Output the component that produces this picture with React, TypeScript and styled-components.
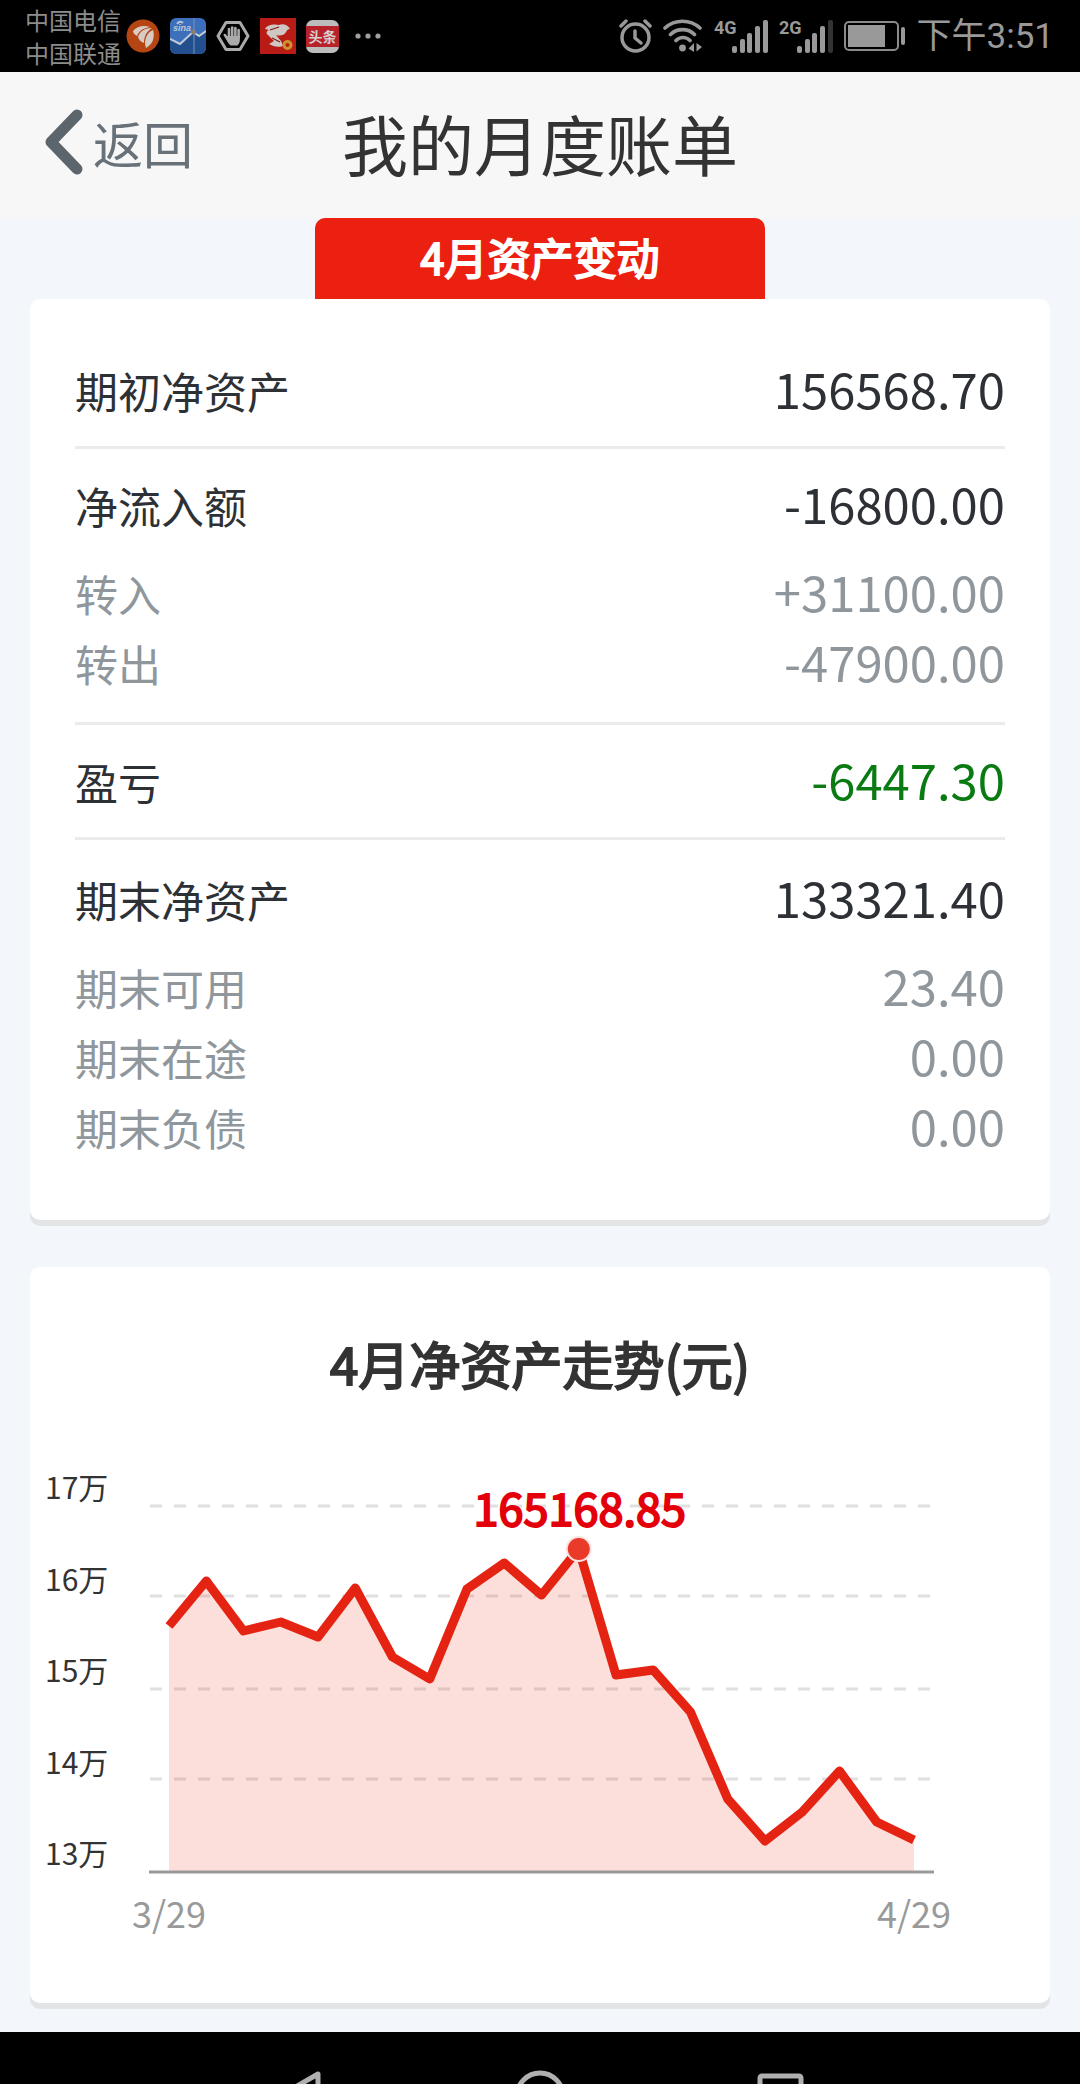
import React from "react";
import styled, { createGlobalStyle } from "styled-components";

const GlobalStyle = createGlobalStyle`
  *, *::before, *::after { box-sizing: border-box; }
  body {
    margin: 0;
    background: #f3f7fb;
    font-family: "Noto Sans CJK SC", "Noto Sans", sans-serif;
    color: #2d3135;
  }
`;

const Page = styled.div`
  display: flex;
  flex-direction: column;
  min-height: 100vh;
`;

/* ---------- status bar ---------- */

const StatusBar = styled.div`
  display: flex;
  align-items: center;
  justify-content: space-between;
  height: 72px;
  padding: 0 26px 0 25px;
  background: #000;
  color: #999;
`;

const StatusGroup = styled.div<{ $gap: number }>`
  display: flex;
  align-items: center;
  gap: ${(p) => p.$gap}px;

  svg { display: block; flex: none; }
`;

const Carriers = styled.div`
  font-size: 24px;
  line-height: 33px;
  color: #8c8c8c;
  margin-right: -5px;
`;

const Clock = styled.time`
  font-family: Roboto, "Noto Sans CJK SC", sans-serif;
  font-size: 35px;
  line-height: 48px;
  padding-top: 2px;
`;

/* ---------- header ---------- */

const Header = styled.header`
  display: grid;
  grid-template-columns: 1fr auto 1fr;
  align-items: center;
  height: 146px;
  padding: 0 42px 7px;
  background: #f7f7f8;
`;

const BackButton = styled.button`
  display: flex;
  align-items: center;
  justify-self: start;
  gap: 10px;
  padding: 0;
  border: 0;
  background: none;
  font: inherit;
  font-size: 50px;
  line-height: 72px;
  color: #687178;
  cursor: pointer;

  svg { display: block; }
`;

const PageTitle = styled.h1`
  margin: 0;
  font-size: 66px;
  font-weight: 400;
  line-height: 96px;
  color: #333;
`;

/* ---------- cards ---------- */

const Content = styled.main`
  display: flex;
  flex-direction: column;
  flex: 1;
  padding: 0 30px 29px;
`;

const TabTitle = styled.h2`
  align-self: center;
  width: 450px;
  margin: 0;
  padding-bottom: 5px;
  border-radius: 10px 10px 0 0;
  background: #ec2010;
  color: #fff;
  font-size: 43px;
  font-weight: 400;
  -webkit-text-stroke: 2px currentColor;
  line-height: 76px;
  text-align: center;
`;

const Card = styled.section`
  border-radius: 10px;
  background: #fff;
  box-shadow: 0 6px 0 #e2e4e6;
`;

const SummaryCard = styled(Card)`
  padding: 35px 45px 56px;
  margin-bottom: 47px;
`;

const ChartCard = styled(Card)`
  padding: 60px 0 43px;
`;

const Group = styled.dl`
  margin: 0;
  padding: 22px 0;
  border-bottom: 3px solid #ebebeb;

  &:last-child {
    padding: 25px 0 0;
    border-bottom: 0;
  }
`;

const Row = styled.div<{ $sub?: boolean }>`
  display: flex;
  align-items: center;
  justify-content: space-between;
  height: ${(p) => (p.$sub ? 70 : 68)}px;
  color: ${(p) => (p.$sub ? "#90979c" : "inherit")};
`;

const SubRows = styled.div`
  padding: 19px 0 2px;
`;

const Label = styled.dt`
  font-size: 43px;
  line-height: 68px;
`;

const Value = styled.dd<{ $loss?: boolean }>`
  margin: 0;
  padding-bottom: 4px;
  font-size: 49px;
  line-height: 64px;
  color: ${(p) => (p.$loss ? "#0a7a12" : "inherit")};
`;

const ChartTitle = styled.h2`
  margin: 0 0 41px;
  font-size: 51px;
  font-weight: 400;
  -webkit-text-stroke: 2px currentColor;
  line-height: 72px;
  text-align: center;
  color: #333;
`;

const Chart = styled.svg`
  display: block;
  width: 100%;
  height: auto;

  .grid { stroke: #e0e0e0; stroke-width: 3; stroke-dasharray: 12 12; }
  .axis { stroke: #999; stroke-width: 3; }
  .area { fill: rgba(236, 32, 16, 0.15); }
  .line { fill: none; stroke: #e52313; stroke-width: 9; stroke-linejoin: round; }
  .y-label { font-size: 30px; fill: #333; }
  .x-label { font-size: 36px; fill: #999; text-anchor: middle; }
  .peak { font-size: 45px; fill: #e3000b; stroke: #e3000b; stroke-width: 2; text-anchor: middle; }
`;

/* ---------- navigation bar ---------- */

const NavBar = styled.nav`
  display: flex;
  justify-content: center;
  gap: 182px;
  height: 52px;
  overflow: hidden;
  background: #000;
`;

const NavButton = styled.button`
  width: 60px;
  height: 100px;
  padding: 0;
  border: 0;
  background: none;
  flex: none;

  svg {
    display: block;
    fill: none;
    stroke: #b0b0b0;
    stroke-width: 5;
    stroke-linejoin: round;
  }
`;

type Item = { label: string; value: string; loss?: boolean; details?: Item[] };

const summary: Item[] = [
  { label: "期初净资产", value: "156568.70" },
  {
    label: "净流入额",
    value: "-16800.00",
    details: [
      { label: "转入", value: "+31100.00" },
      { label: "转出", value: "-47900.00" },
    ],
  },
  { label: "盈亏", value: "-6447.30", loss: true },
  {
    label: "期末净资产",
    value: "133321.40",
    details: [
      { label: "期末可用", value: "23.40" },
      { label: "期末在途", value: "0.00" },
      { label: "期末负债", value: "0.00" },
    ],
  },
];

const gridLines = [66, 156, 249, 339];
const yLabels = [
  { text: "17万", y: 59 },
  { text: "16万", y: 151 },
  { text: "15万", y: 242 },
  { text: "14万", y: 334 },
  { text: "13万", y: 425 },
];

const BASE = 432;
const START_X = 139;
const END_X = 884;
const PEAK = 11;
const heights = [
  186, 141, 191, 182, 197, 148, 217, 239, 149, 123, 155, 109, 235, 230, 272,
  359, 401, 372, 331, 382, 400,
];
const points = heights.map((y, i) => ({
  x: START_X + ((END_X - START_X) * i) / (heights.length - 1),
  y,
}));
const path = points.map((p) => `${p.x},${p.y}`).join(" L");

const signalBars = [
  { x: 18, h: 7 },
  { x: 26, h: 14 },
  { x: 33, h: 20 },
  { x: 41, h: 27 },
  { x: 49, h: 33 },
];

function Signal({ kind, level }: { kind: string; level: number }) {
  return (
    <svg width="54" height="36" viewBox="0 0 54 36" role="img" aria-label={`${kind} 信号`}>
      <text
        x="0"
        y="16"
        fontSize="18"
        fontWeight="700"
        fill="#999"
        fontFamily='"Liberation Sans Narrow", Roboto, sans-serif'
      >
        {kind}
      </text>
      {signalBars.map((b, i) => (
        <rect
          key={b.x}
          x={b.x}
          y={35 - b.h}
          width="5"
          height={b.h}
          rx="2"
          fill={i < level ? "#999" : "#333"}
        />
      ))}
    </svg>
  );
}

function NotificationIcons() {
  return (
    <>
      <svg width="34" height="34" viewBox="0 0 34 34" aria-hidden="true">
        <circle cx="17" cy="17" r="16.5" fill="#b64514" />
        <path d="M7 12 C11 7 18 6 24 8 C17 9 13 12 11 17 C9 16 7 14 7 12 Z" fill="#d8cbc4" />
        <path d="M12 18 C14 12 19 9 26 9 C21 12 18 17 18 24 C15 23 13 21 12 18 Z" fill="#d8cbc4" />
        <path d="M19 25 C19 18 22 13 27 11 C29 18 27 25 20 29 Z" fill="#d8cbc4" />
      </svg>
      <svg width="36" height="36" viewBox="0 0 36 36" aria-hidden="true">
        <rect width="36" height="36" rx="6" fill="#3c70bd" />
        <path d="M0 21 L10 26 L23 14 L29 18 L36 13 V30 a6 6 0 0 1 -6 6 H6 a6 6 0 0 1 -6 -6 Z" fill="#234f8e" />
        <path d="M0 21 L10 26 L23 14 L29 18 L36 13" fill="none" stroke="#c4ccd6" strokeWidth="2" />
        <path d="M24 0 V36" stroke="#7794ba" strokeWidth="1" />
        <circle cx="23.5" cy="14" r="2.5" fill="#8d7f6d" />
        <path d="M7 6 Q10 2 13 5" fill="none" stroke="#bcc6d4" strokeWidth="2" />
        <text x="3" y="13" fontSize="9" fontWeight="700" fontStyle="italic" fill="#bcc6d4" fontFamily='"Liberation Sans", sans-serif'>
          sina
        </text>
      </svg>
      <svg width="34" height="30" viewBox="0 0 34 30" aria-hidden="true">
        <path d="M10 1.5 H24 L32 15 L24 28.5 H10 L2 15 Z" fill="none" stroke="#aaa" strokeWidth="3" strokeLinejoin="round" />
        <g stroke="#aaa" strokeWidth="2.6" strokeLinecap="round" fill="none">
          <path d="M13 16 V8 M16.2 15 V6.5 M19.4 15 V7 M22.6 16 V9 M8.8 14 L12.5 19" />
        </g>
        <path d="M11.7 15 H23.9 V19 C23.9 22 22 24 21.5 24.5 H14.5 C12.5 23 11 20 9 16 Z" fill="#aaa" />
      </svg>
      <svg width="36" height="36" viewBox="0 0 36 36" aria-hidden="true">
        <rect width="36" height="36" fill="#b81c14" />
        <path d="M5 11 C8 6 15 6 19 7 C23 5 28 7 30 11 C28 11 27 12 26 14 C24 18 19 18 16 17 L21 23 L23 28 C17 30 13 28 9 26 L14 23 L8 17 C6 16 6 13 9 12 Z" fill="#cfc7c4" />
        <path d="M10 12 L19 9 M12 20 L20 24" stroke="#7d1913" strokeWidth="1.2" />
        <circle cx="27.5" cy="27" r="3.5" fill="none" stroke="#c9962b" strokeWidth="3" />
      </svg>
      <svg width="33" height="33" viewBox="0 0 33 33" aria-hidden="true">
        <rect width="33" height="33" rx="7" fill="#bcbcbc" />
        <rect y="6" width="33" height="21" fill="#b8222b" />
        <text x="16.5" y="22" fontSize="14" fontWeight="700" fill="#d6d0d0" textAnchor="middle">
          头条
        </text>
      </svg>
      <svg width="36" height="6" viewBox="0 0 36 6" aria-hidden="true">
        <g fill="#a0a0a0">
          <circle cx="9" cy="3" r="2.6" />
          <circle cx="19" cy="3" r="2.6" />
          <circle cx="29" cy="3" r="2.6" />
        </g>
      </svg>
    </>
  );
}

function AlarmIcon() {
  return (
    <svg width="33" height="34" viewBox="0 0 33 34" aria-hidden="true" fill="none" stroke="#999" strokeWidth="3.5" strokeLinecap="round">
      <circle cx="16.5" cy="18.5" r="13.5" />
      <path d="M2 7 L7 2 M31 7 L26 2 M16 12 V19 L22 24" />
    </svg>
  );
}

function WifiIcon() {
  return (
    <svg width="40" height="34" viewBox="0 0 40 34" aria-hidden="true" fill="none" stroke="#999" strokeWidth="3.6" strokeLinecap="round">
      <path d="M2 9 C12 0 27 0 37 9 M7.5 15.5 C14 9 25 9 31.500 15.500 M13 21.5 C17 17.5 23 17.5 27 21.5" />
      <circle cx="19.5" cy="29" r="3.4" fill="#999" stroke="none" />
      <path d="M31 24 V33 L25.5 29.5 Z M33.5 32.5 V24 L39 28 Z" fill="#999" stroke="none" />
    </svg>
  );
}

function BatteryIcon() {
  return (
    <svg width="62" height="30" viewBox="0 0 62 30" role="img" aria-label="电量">
      <rect x="1" y="1" width="53" height="28" rx="4" fill="none" stroke="#8a8a8a" strokeWidth="2" />
      <rect x="4" y="4" width="37" height="22" fill="#999" />
      <rect x="57" y="6" width="4" height="18" rx="2" fill="#999" />
    </svg>
  );
}

function SummaryGroup({ item }: { item: Item }) {
  return (
    <Group>
      <Row>
        <Label>{item.label}</Label>
        <Value $loss={item.loss}>{item.value}</Value>
      </Row>
      {item.details && (
        <SubRows>
          {item.details.map((d) => (
            <Row key={d.label} $sub>
              <Label>{d.label}</Label>
              <Value>{d.value}</Value>
            </Row>
          ))}
        </SubRows>
      )}
    </Group>
  );
}

function TrendChart() {
  const peak = points[PEAK];
  return (
    <Chart viewBox="0 0 1020 520" role="img" aria-label="4月净资产走势">
      {gridLines.map((y) => (
        <path key={y} className="grid" d={`M120 ${y} H900`} />
      ))}
      <path className="area" d={`M${START_X},${BASE} L${path} L${END_X},${BASE} Z`} />
      <path className="axis" d={`M119 ${BASE} H904`} />
      <path className="line" d={`M${path}`} />
      <circle cx={peak.x} cy={peak.y} r="13" fill="#fbe3e0" />
      <circle cx={peak.x} cy={peak.y} r="11" fill="#ea3a2a" />
      <text className="peak" x={peak.x + 1} y="86">
        165168.85
      </text>
      {yLabels.map((l) => (
        <text key={l.text} className="y-label" x="15" y={l.y}>
          {l.text}
        </text>
      ))}
      <text className="x-label" x={START_X} y="488">
        3/29
      </text>
      <text className="x-label" x={END_X} y="488">
        4/29
      </text>
    </Chart>
  );
}

export default function App() {
  return (
    <Page>
      <GlobalStyle />
      <StatusBar>
        <StatusGroup $gap={10}>
          <Carriers>
            <div>中国电信</div>
            <div>中国联通</div>
          </Carriers>
          <NotificationIcons />
        </StatusGroup>
        <StatusGroup $gap={11}>
          <AlarmIcon />
          <WifiIcon />
          <Signal kind="4G" level={5} />
          <Signal kind="2G" level={4} />
          <BatteryIcon />
          <Clock>下午3:51</Clock>
        </StatusGroup>
      </StatusBar>

      <Header>
        <BackButton type="button">
          <svg width="41" height="68" viewBox="0 0 41 68" aria-hidden="true">
            <path d="M35 7 L9 34 L35 61" fill="none" stroke="#5c656b" strokeWidth="11" strokeLinecap="round" strokeLinejoin="round" />
          </svg>
          返回
        </BackButton>
        <PageTitle>我的月度账单</PageTitle>
      </Header>

      <Content>
        <TabTitle>4月资产变动</TabTitle>
        <SummaryCard>
          {summary.map((item) => (
            <SummaryGroup key={item.label} item={item} />
          ))}
        </SummaryCard>
        <ChartCard>
          <ChartTitle>4月净资产走势(元)</ChartTitle>
          <TrendChart />
        </ChartCard>
      </Content>

      <NavBar>
        <NavButton type="button" aria-label="返回上一页">
          <svg width="60" height="100" viewBox="0 0 60 100">
            <path d="M50 42 V88 L10 65 Z" />
          </svg>
        </NavButton>
        <NavButton type="button" aria-label="主屏幕">
          <svg width="60" height="100" viewBox="0 0 60 100">
            <circle cx="30" cy="64" r="23" />
          </svg>
        </NavButton>
        <NavButton type="button" aria-label="最近任务">
          <svg width="60" height="100" viewBox="0 0 60 100">
            <rect x="8" y="44" width="41" height="41" rx="2" />
          </svg>
        </NavButton>
      </NavBar>
    </Page>
  );
}
